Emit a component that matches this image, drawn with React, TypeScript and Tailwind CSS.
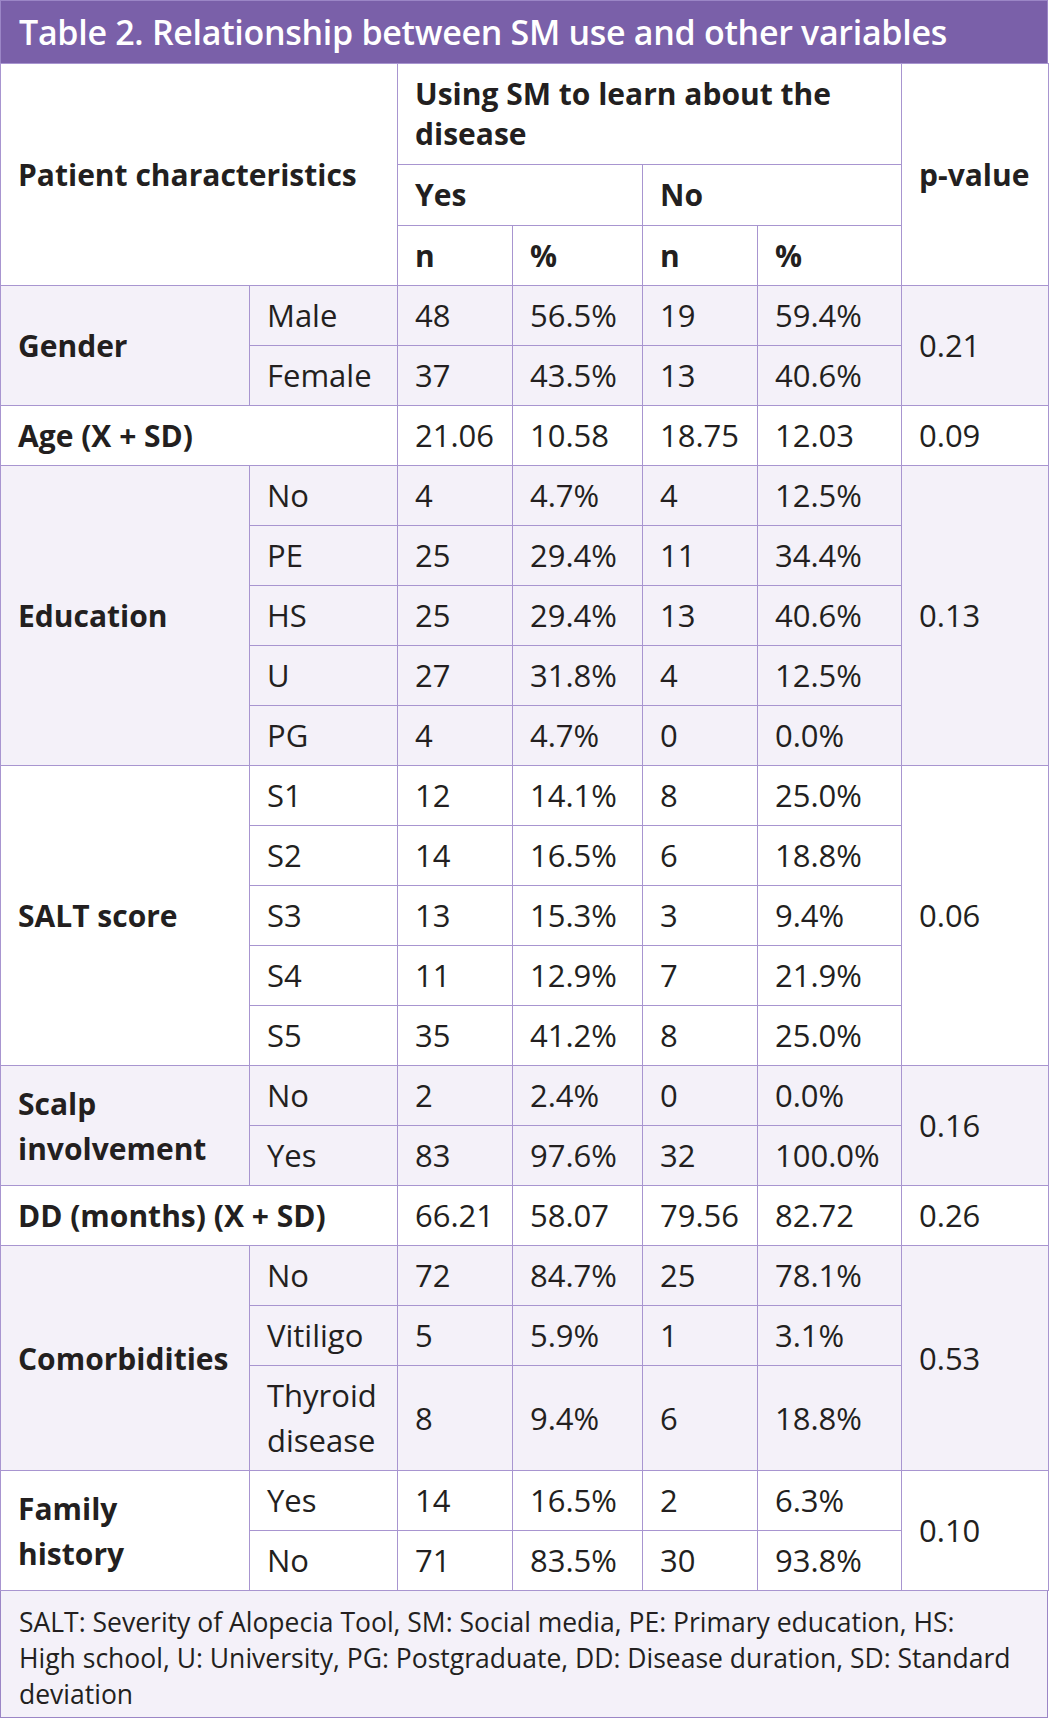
type Group = {
  label: string;
  shade: boolean;
  p: string;
  span?: boolean;
  rows: string[][];
};

const GROUPS: Group[] = [
  { label: "Gender", shade: true, p: "0.21", rows: [["Male", "48", "56.5%", "19", "59.4%"], ["Female", "37", "43.5%", "13", "40.6%"]] },
  { label: "Age (X + SD)", shade: false, p: "0.09", span: true, rows: [["", "21.06", "10.58", "18.75", "12.03"]] },
  {
    label: "Education",
    shade: true,
    p: "0.13",
    rows: [
      ["No", "4", "4.7%", "4", "12.5%"],
      ["PE", "25", "29.4%", "11", "34.4%"],
      ["HS", "25", "29.4%", "13", "40.6%"],
      ["U", "27", "31.8%", "4", "12.5%"],
      ["PG", "4", "4.7%", "0", "0.0%"],
    ],
  },
  {
    label: "SALT score",
    shade: false,
    p: "0.06",
    rows: [
      ["S1", "12", "14.1%", "8", "25.0%"],
      ["S2", "14", "16.5%", "6", "18.8%"],
      ["S3", "13", "15.3%", "3", "9.4%"],
      ["S4", "11", "12.9%", "7", "21.9%"],
      ["S5", "35", "41.2%", "8", "25.0%"],
    ],
  },
  { label: "Scalp\ninvolvement", shade: true, p: "0.16", rows: [["No", "2", "2.4%", "0", "0.0%"], ["Yes", "83", "97.6%", "32", "100.0%"]] },
  { label: "DD (months) (X + SD)", shade: false, p: "0.26", span: true, rows: [["", "66.21", "58.07", "79.56", "82.72"]] },
  {
    label: "Comorbidities",
    shade: true,
    p: "0.53",
    rows: [
      ["No", "72", "84.7%", "25", "78.1%"],
      ["Vitiligo", "5", "5.9%", "1", "3.1%"],
      ["Thyroid\ndisease", "8", "9.4%", "6", "18.8%"],
    ],
  },
  { label: "Family\nhistory", shade: false, p: "0.10", rows: [["Yes", "14", "16.5%", "2", "6.3%"], ["No", "71", "83.5%", "30", "93.8%"]] },
];

// shared cell look: thin lavender rules, left padded text
const CELL = "border border-[#a895d0] pl-[17px] pr-1 align-middle";

export default function App() {
  return (
    <div className="w-[1048px] bg-white text-[#231f20] [font-family:'Open_Sans',sans-serif]">
      <div className="flex h-[63px] items-center border-x border-t border-[#9b86c6] bg-[#7a60a9] pl-[18px]">
        <h1 className="text-[34px] font-semibold leading-none tracking-[-0.3px] text-white">
          Table 2. Relationship between SM use and other variables
        </h1>
      </div>

      <table className="w-[1048px] table-fixed border-collapse">
        <colgroup>
          <col className="w-[249px]" />
          <col className="w-[148px]" />
          <col className="w-[115px]" />
          <col className="w-[130px]" />
          <col className="w-[115px]" />
          <col className="w-[144px]" />
          <col className="w-[147px]" />
        </colgroup>
        <thead className="text-[30px] font-bold">
          <tr className="h-[101px]">
            <th colSpan={2} rowSpan={3} className={`${CELL} text-left leading-[40px]`}>
              Patient characteristics
            </th>
            <th colSpan={4} className={`${CELL} text-left leading-[40px]`}>
              Using SM to learn about the disease
            </th>
            <th rowSpan={3} className={`${CELL} text-left leading-[40px]`}>
              p-value
            </th>
          </tr>
          <tr className="h-[61px]">
            <th colSpan={2} className={`${CELL} text-left leading-[40px]`}>Yes</th>
            <th colSpan={2} className={`${CELL} text-left leading-[40px]`}>No</th>
          </tr>
          <tr className="h-[60px]">
            <th className={`${CELL} text-left leading-[40px]`}>n</th>
            <th className={`${CELL} text-left leading-[40px]`}>%</th>
            <th className={`${CELL} text-left leading-[40px]`}>n</th>
            <th className={`${CELL} text-left leading-[40px]`}>%</th>
          </tr>
        </thead>
        <tbody className="text-[31px] leading-[45px]">
          {GROUPS.map((g) =>
            g.rows.map((r, i) => {
              const bg = g.shade ? "bg-[#f4f1f9]" : "bg-white";
              const tall = r[0].includes("\n");
              return (
                <tr key={g.label + i} className={`${bg} ${tall ? "h-[105px]" : "h-[60px]"}`}>
                  {i === 0 && (
                    <td
                      rowSpan={g.rows.length}
                      colSpan={g.span ? 2 : 1}
                      className={`${CELL} whitespace-pre-line text-[30px] font-bold`}
                    >
                      {g.label}
                    </td>
                  )}
                  {!g.span && <td className={`${CELL} whitespace-pre-line`}>{r[0]}</td>}
                  {r.slice(1).map((v, k) => (
                    <td key={k} className={CELL}>
                      {v}
                    </td>
                  ))}
                  {i === 0 && (
                    <td rowSpan={g.rows.length} className={CELL}>
                      {g.p}
                    </td>
                  )}
                </tr>
              );
            })
          )}
        </tbody>
      </table>

      <div className="h-[127px] border-x border-b border-[#9b86c6] bg-[#f4f1f9] pl-[18px] pt-[13px] text-[26.5px] leading-[36px]">
        SALT: Severity of Alopecia Tool, SM: Social media, PE: Primary education, HS:
        <br />
        High school, U: University, PG: Postgraduate, DD: Disease duration, SD: Standard
        <br />
        deviation
      </div>
    </div>
  );
}
